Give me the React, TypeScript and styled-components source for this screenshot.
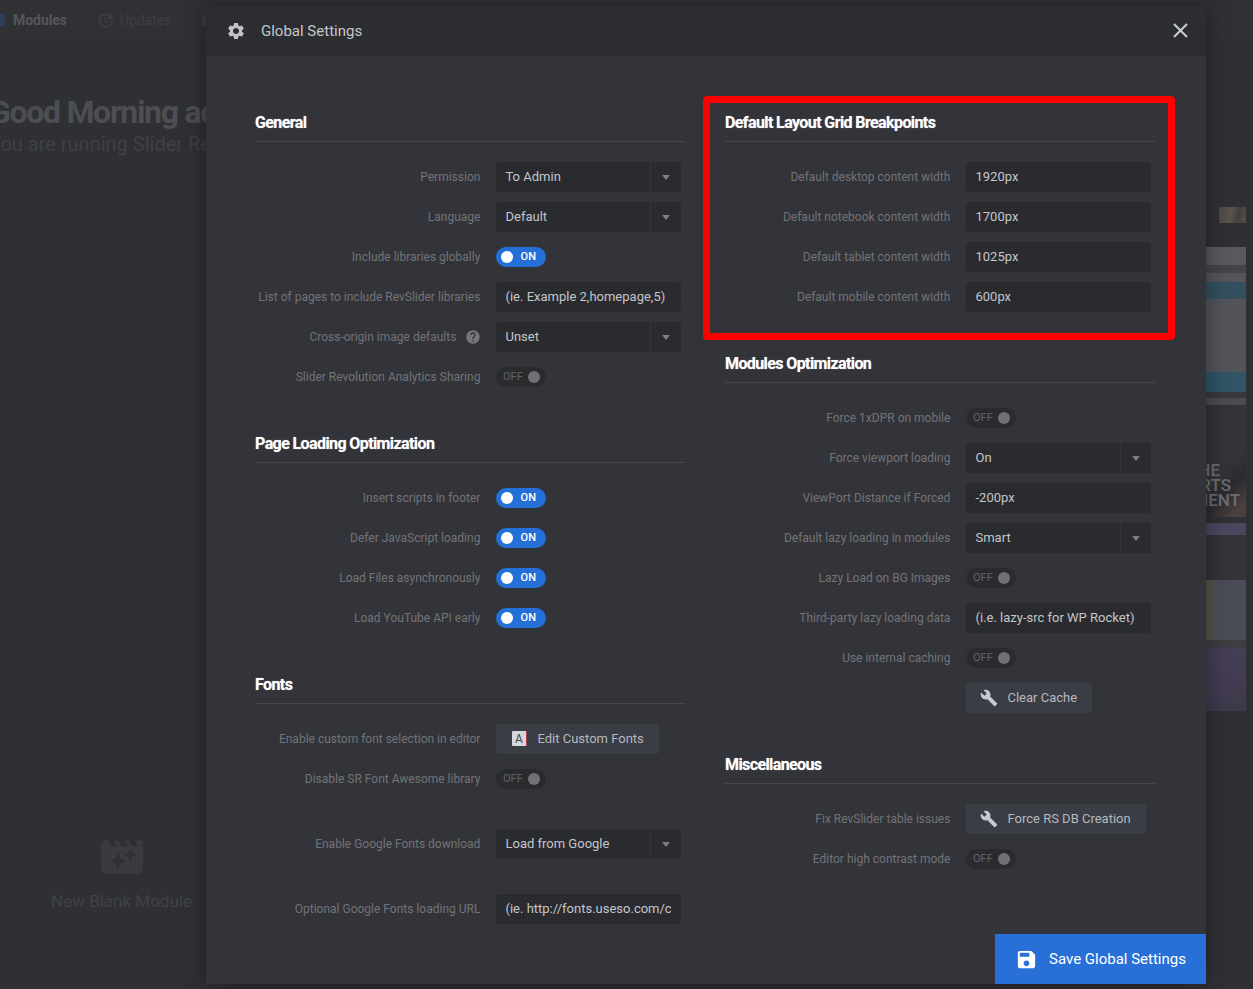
import React from 'react';
import styled, { createGlobalStyle } from 'styled-components';
import { MdSettings, MdBuild, MdSave, MdClose, MdHelp, MdUpdate, MdMovieFilter, MdViewModule } from 'react-icons/md';

const GlobalStyle = createGlobalStyle`
  html, body {
    margin: 0;
    padding: 0;
    height: 100%;
    overflow: hidden;
    background: #2f3034;
    font-family: Roboto, "Liberation Sans", sans-serif;
  }
  * { box-sizing: border-box; }
`;

const Page = styled.div`
  position: relative;
  width: 1253px;
  height: 989px;
  overflow: hidden;
  background: #2f3034;
  display: flex;
  flex-direction: column;
`;

/* dimmed page behind the dialog */
const TopNav = styled.div`
  height: 40px;
  flex: none;
  display: flex;
  align-items: center;
  background: #303135;
`;

const NavMarker = styled.span`
  width: 5px;
  height: 12px;
  background: #2c3d5a;
  margin-right: 8px;
`;

const NavItem = styled.span<{ $strong?: boolean }>`
  display: flex;
  align-items: center;
  gap: 5px;
  font-size: 14px;
  letter-spacing: -0.05px;
  font-weight: ${(p) => (p.$strong ? 700 : 400)};
  color: ${(p) => (p.$strong ? '#55565b' : '#3e3f44')};
  margin-right: 29px;
`;

const Hero = styled.div`
  height: 166px;
  flex: none;
  padding-top: 52px;
  margin-left: -11px;
  background: #2f3034;
`;

const HeroTitle = styled.div`
  font-size: 32px;
  line-height: 40px;
  font-weight: 700;
  letter-spacing: -1.3px;
  color: #4d4e53;
  white-space: nowrap;
`;

const HeroSub = styled.div`
  font-size: 20px;
  line-height: 26px;
  color: #3f4045;
  white-space: nowrap;
  margin-top: -1px;
`;

const Lower = styled.div`
  flex: 1;
  display: flex;
  justify-content: space-between;
`;

const BlankCard = styled.div`
  width: 141px;
  margin: 626px 0 0 51px;
  display: flex;
  flex-direction: column;
  align-items: center;
  color: #404147;
  font-size: 17px;
  white-space: nowrap;
`;

const BlankIcon = styled(MdMovieFilter)`
  width: 50px;
  height: 50px;
  color: #3a3b40;
  margin-bottom: 9px;
`;

const Thumbs = styled.div`
  width: 40px;
  margin-right: 7px;
  display: flex;
  flex-direction: column;
  align-items: stretch;
`;

const Thumb = styled.div<{ $h: number; $bg: string; $gap?: number }>`
  height: ${(p) => p.$h}px;
  background: ${(p) => p.$bg};
  margin-top: ${(p) => p.$gap ?? 0}px;
  overflow: hidden;
`;

const SmallThumb = styled(Thumb)`
  width: 27px;
  align-self: flex-end;
`;

const ThumbWords = styled.div`
  padding-top: 58px;
  display: flex;
  flex-direction: column;
  align-items: flex-end;
  font-size: 17px;
  font-weight: 500;
  color: #6c6d71;
  white-space: nowrap;
`;

const ThumbWord = styled.span<{ $pad: number }>`
  height: 15px;
  line-height: 15px;
  padding-right: ${(p) => p.$pad}px;
`;

/* dialog */
const Modal = styled.div`
  position: absolute;
  top: 6px;
  left: 206px;
  width: 1000px;
  height: 978px;
  background: #333439;
  box-shadow: 0 0 22px rgba(0, 0, 0, 0.4);
  display: flex;
  flex-direction: column;
`;

const ModalHeader = styled.div`
  height: 50px;
  flex: none;
  background: #2c2d31;
  display: flex;
  align-items: center;
  padding: 0 13px 1px 20px;
  color: #c4c6cb;
  font-size: 15px;
`;

const HeaderGear = styled(MdSettings)`
  width: 20px;
  height: 20px;
  color: #c2c3c8;
  margin-right: 15px;
`;

const HeaderTitle = styled.span`
  flex: 1;
`;

const CloseIcon = styled(MdClose)`
  width: 25px;
  height: 25px;
  color: #c9ccd4;
`;

const Columns = styled.div`
  display: grid;
  grid-template-columns: 430px 430px;
  column-gap: 40px;
  padding: 54px 0 0 49px;
`;

const Column = styled.div`
  display: flex;
  flex-direction: column;
  gap: 34px;
`;

const SectionTitle = styled.div`
  height: 32px;
  padding-bottom: 5px;
  line-height: 26px;
  font-size: 16px;
  font-weight: 700;
  letter-spacing: -0.6px;
  color: #ffffff;
  text-shadow: 0 0 1px rgba(255, 255, 255, 0.6);
  border-bottom: 1px solid #46474c;
  margin-bottom: 15px;
`;

const Row = styled.div<{ $top?: number }>`
  height: 40px;
  display: flex;
  align-items: center;
  margin-top: ${(p) => p.$top ?? 0}px;
`;

const Label = styled.div`
  width: 225.4px;
  flex: none;
  display: flex;
  justify-content: flex-end;
  align-items: center;
  font-size: 12px;
  color: #727378;
  white-space: nowrap;
`;

const Control = styled.div`
  margin-left: 15.6px;
  display: flex;
  align-items: center;
`;

const HelpIcon = styled(MdHelp)`
  width: 16px;
  height: 16px;
  color: #75767b;
  margin-left: 9px;
  margin-right: -1px;
`;

const TextField = styled.input`
  width: 185px;
  height: 30px;
  border: 0;
  outline: 0;
  border-radius: 3px;
  background: #2a2b2f;
  padding: 0 9.5px 1px;
  font-family: inherit;
  font-size: 13px;
  color: #c4c6cb;
  &::placeholder {
    color: #c4c6cb;
    opacity: 1;
  }
`;

const SelectBox = styled.div`
  width: 185px;
  height: 30px;
  display: flex;
  border-radius: 3px 0 0 3px;
  background: #2a2b2f;
  font-size: 13px;
  color: #c4c6cb;
`;

const SelectValue = styled.div`
  flex: 1;
  display: flex;
  align-items: center;
  padding: 0 0 1px 9.5px;
`;

const SelectArrow = styled.div`
  width: 31px;
  flex: none;
  display: flex;
  align-items: center;
  justify-content: center;
  border-left: 1px solid #333439;
  &::after {
    content: '';
    border-left: 4px solid transparent;
    border-right: 4px solid transparent;
    border-top: 5px solid #7d7e83;
  }
`;

const Toggle = styled.div<{ $on?: boolean }>`
  width: 50px;
  height: 20px;
  border-radius: 10px;
  display: flex;
  align-items: center;
  flex-direction: ${(p) => (p.$on ? 'row' : 'row-reverse')};
  justify-content: space-between;
  padding: ${(p) => (p.$on ? '0 10px 1px 5px' : '0 6px 1px 7px')};
  background: ${(p) => (p.$on ? '#2470d8' : '#2a2b2f')};
  color: ${(p) => (p.$on ? '#ffffff' : '#62646a')};
  font-size: 11px;
  font-weight: ${(p) => (p.$on ? 500 : 400)};
`;

const Knob = styled.span<{ $on?: boolean }>`
  width: 12px;
  height: 12px;
  margin-top: 1px;
  border-radius: 50%;
  background: ${(p) => (p.$on ? '#ffffff' : '#707176')};
`;

const ActionButton = styled.div`
  height: 30px;
  display: flex;
  align-items: center;
  padding: 0 15px 1px;
  border-radius: 3px;
  background: #3b3d45;
  font-size: 13px;
  color: #b6b8bf;
  white-space: nowrap;
`;

const WrenchIcon = styled(MdBuild)`
  width: 18px;
  height: 18px;
  color: #c9cacf;
  margin: 0 9.5px 0 -1px;
`;

const FontBadge = styled.span`
  width: 15px;
  height: 15px;
  margin: 0 10.5px 0 1px;
  display: flex;
  align-items: center;
  justify-content: center;
  background: #d5d7dc;
  border-right: 1px solid #b0404a;
  border-radius: 1px;
  font-size: 12px;
  color: #45474f;
`;

const SaveButton = styled.div`
  position: absolute;
  right: 0;
  bottom: 0;
  width: 211px;
  height: 50px;
  background: #2870d8;
  color: #ffffff;
  display: flex;
  align-items: center;
  padding-left: 20px;
  font-size: 15px;
`;

const SaveIcon = styled(MdSave)`
  width: 23px;
  height: 23px;
  margin-right: 11px;
`;

const Highlight = styled.div`
  position: absolute;
  left: 497px;
  top: 90px;
  width: 472px;
  height: 244px;
  border: 7px solid #ff0000;
  border-radius: 4px;
  pointer-events: none;
`;

type Field =
  | { kind: 'text'; value?: string; placeholder?: string }
  | { kind: 'select'; value: string }
  | { kind: 'toggle'; on: boolean }
  | { kind: 'button'; text: string; icon: 'wrench' | 'font' };

type Item = { label: string; field: Field; help?: boolean; top?: number };

const on: Field = { kind: 'toggle', on: true };
const off: Field = { kind: 'toggle', on: false };

const leftColumn: { title: string; items: Item[] }[] = [
  {
    title: 'General',
    items: [
      { label: 'Permission', field: { kind: 'select', value: 'To Admin' } },
      { label: 'Language', field: { kind: 'select', value: 'Default' } },
      { label: 'Include libraries globally', field: on },
      { label: 'List of pages to include RevSlider libraries', field: { kind: 'text', placeholder: '(ie. Example 2,homepage,5)' } },
      { label: 'Cross-origin image defaults', help: true, field: { kind: 'select', value: 'Unset' } },
      { label: 'Slider Revolution Analytics Sharing', field: off },
    ],
  },
  {
    title: 'Page Loading Optimization',
    items: [
      { label: 'Insert scripts in footer', field: on },
      { label: 'Defer JavaScript loading', field: on },
      { label: 'Load Files asynchronously', field: on },
      { label: 'Load YouTube API early', field: on },
    ],
  },
  {
    title: 'Fonts',
    items: [
      { label: 'Enable custom font selection in editor', field: { kind: 'button', text: 'Edit Custom Fonts', icon: 'font' } },
      { label: 'Disable SR Font Awesome library', field: off },
      { label: 'Enable Google Fonts download', top: 25, field: { kind: 'select', value: 'Load from Google' } },
      { label: 'Optional Google Fonts loading URL', top: 25, field: { kind: 'text', placeholder: '(ie. http://fonts.useso.com/css?family' } },
    ],
  },
];

const rightColumn: { title: string; items: Item[] }[] = [
  {
    title: 'Default Layout Grid Breakpoints',
    items: [
      { label: 'Default desktop content width', field: { kind: 'text', value: '1920px' } },
      { label: 'Default notebook content width', field: { kind: 'text', value: '1700px' } },
      { label: 'Default tablet content width', field: { kind: 'text', value: '1025px' } },
      { label: 'Default mobile content width', field: { kind: 'text', value: '600px' } },
    ],
  },
  {
    title: 'Modules Optimization',
    items: [
      { label: 'Force 1xDPR on mobile', field: off },
      { label: 'Force viewport loading', field: { kind: 'select', value: 'On' } },
      { label: 'ViewPort Distance if Forced', field: { kind: 'text', value: '-200px' } },
      { label: 'Default lazy loading in modules', field: { kind: 'select', value: 'Smart' } },
      { label: 'Lazy Load on BG Images', field: off },
      { label: 'Third-party lazy loading data', field: { kind: 'text', placeholder: '(i.e. lazy-src for WP Rocket)' } },
      { label: 'Use internal caching', field: off },
      { label: '', field: { kind: 'button', text: 'Clear Cache', icon: 'wrench' } },
    ],
  },
  {
    title: 'Miscellaneous',
    items: [
      { label: 'Fix RevSlider table issues', field: { kind: 'button', text: 'Force RS DB Creation', icon: 'wrench' } },
      { label: 'Editor high contrast mode', field: off },
    ],
  },
];

const FieldControl: React.FC<{ field: Field }> = ({ field }) => {
  switch (field.kind) {
    case 'text':
      return <TextField readOnly defaultValue={field.value} placeholder={field.placeholder} />;
    case 'select':
      return (
        <SelectBox>
          <SelectValue>{field.value}</SelectValue>
          <SelectArrow />
        </SelectBox>
      );
    case 'toggle':
      return (
        <Toggle $on={field.on}>
          <Knob $on={field.on} />
          {field.on ? 'ON' : 'OFF'}
        </Toggle>
      );
    case 'button':
      return (
        <ActionButton>
          {field.icon === 'wrench' ? <WrenchIcon /> : <FontBadge>A</FontBadge>}
          {field.text}
        </ActionButton>
      );
  }
};

const Sections: React.FC<{ list: { title: string; items: Item[] }[] }> = ({ list }) => (
  <Column>
    {list.map((section) => (
      <div key={section.title}>
        <SectionTitle>{section.title}</SectionTitle>
        {section.items.map((item, i) => (
          <Row key={i} $top={item.top}>
            <Label>
              {item.label}
              {item.help && <HelpIcon />}
            </Label>
            <Control>
              <FieldControl field={item.field} />
            </Control>
          </Row>
        ))}
      </div>
    ))}
  </Column>
);

const App: React.FC = () => (
  <Page>
    <GlobalStyle />
    <TopNav>
      <NavMarker />
      <NavItem $strong>Modules</NavItem>
      <NavItem>
        <MdUpdate size={19} />
        Updates
      </NavItem>
      <NavItem>
        <MdViewModule size={17} />
      </NavItem>
    </TopNav>
    <Hero>
      <HeroTitle>Good Morning admin</HeroTitle>
      <HeroSub>You are running Slider Revolution</HeroSub>
    </Hero>
    <Lower>
      <BlankCard>
        <BlankIcon />
        New Blank Module
      </BlankCard>
      <Thumbs>
        <SmallThumb $h={16} $gap={1} $bg="linear-gradient(100deg, #4d4843, #5a544e 45%, #453f3b 70%, #57514b)" />
        <Thumb $h={18} $gap={24} $bg="#58595d" />
        <Thumb $h={8} $bg="#454549" />
        <Thumb $h={9} $bg="#55565a" />
        <Thumb $h={17} $bg="#34505f" />
        <Thumb $h={73} $bg="#53545a" />
        <Thumb $h={20} $bg="#2f5566" />
        <Thumb $h={6} $bg="#38393d" />
        <Thumb $h={7} $bg="#4b4c50" />
        <Thumb $h={112} $bg="linear-gradient(135deg, #343338 55%, #2b2a2f 70%, #4a403e 90%)">
          <ThumbWords>
            <ThumbWord $pad={26}>THE</ThumbWord>
            <ThumbWord $pad={15}>ARTS</ThumbWord>
            <ThumbWord $pad={6}>MENT</ThumbWord>
          </ThumbWords>
        </Thumb>
        <Thumb $h={12} $gap={6} $bg="#4a4860" />
        <Thumb $h={45} $bg="#333338" />
        <Thumb $h={60} $bg="linear-gradient(90deg, #5a5548 0, #4a4d58 35%)" />
        <Thumb $h={7} $bg="#3d3e42" />
        <Thumb $h={64} $bg="linear-gradient(180deg, #453f55, #423b50 70%, #3d3a4c)" />
      </Thumbs>
    </Lower>
    <Modal>
      <ModalHeader>
        <HeaderGear />
        <HeaderTitle>Global Settings</HeaderTitle>
        <CloseIcon />
      </ModalHeader>
      <Columns>
        <Sections list={leftColumn} />
        <Sections list={rightColumn} />
      </Columns>
      <Highlight />
      <SaveButton>
        <SaveIcon />
        Save Global Settings
      </SaveButton>
    </Modal>
  </Page>
);

export default App;
